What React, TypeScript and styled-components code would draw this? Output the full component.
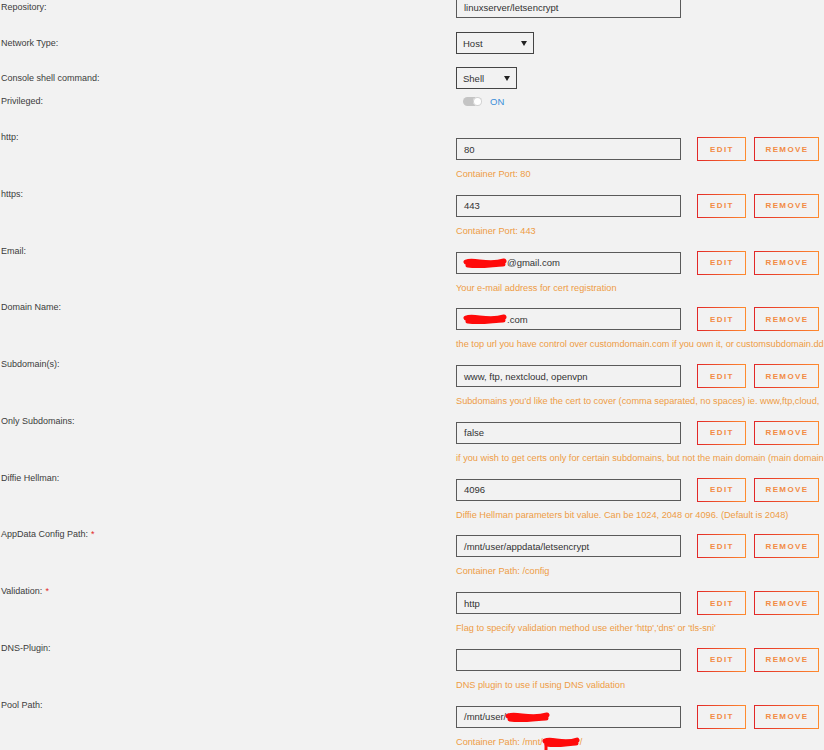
import React from 'react'
import styled, { createGlobalStyle } from 'styled-components'

const colors = {
  page: '#f2f2f2',
  text: '#3c3c3c',
  field: '#5a5a5a',
  helper: '#ee9c45',
  red: '#e22828',
  orange: '#ff8c2f',
  blue: '#3b8fd9',
}

const GlobalStyle = createGlobalStyle`
  html, body {
    margin: 0;
    padding: 0;
    background: ${colors.page};
    overflow: hidden;
  }
  body {
    font-family: "Liberation Sans", Arial, sans-serif;
    color: ${colors.text};
  }
`

const Form = styled.div`
  display: flex;
  flex-direction: column;
  margin-top: -4px;
  padding-left: 1px;
  overflow: hidden;
`

const SimpleRow = styled.div<{ $top: number; $h: number }>`
  display: grid;
  grid-template-columns: 455px 1fr;
  align-items: center;
  height: ${(p) => p.$h}px;
  margin-top: ${(p) => p.$top}px;
`

const ConfigRow = styled.div<{ $first?: boolean }>`
  display: grid;
  grid-template-columns: 455px 1fr;
  align-items: start;
  height: 56.75px;
  margin-top: ${(p) => (p.$first ? 18 : 0)}px;
`

const Label = styled.div`
  font-size: 9px;
  line-height: 12px;
  white-space: nowrap;
`

const Required = styled.span`
  color: ${colors.red};
  margin-left: 3px;
`

const Field = styled.div<{ $w?: number }>`
  box-sizing: border-box;
  width: ${(p) => p.$w ?? 225}px;
  height: 22px;
  border: 1px solid ${colors.field};
  padding: 0 7px;
  display: flex;
  align-items: center;
  font-size: 9.5px;
  color: #333;
  white-space: nowrap;
  overflow: hidden;
`

const Select = styled.div<{ $w: number }>`
  box-sizing: border-box;
  width: ${(p) => p.$w}px;
  height: 22px;
  border: 1px solid #444;
  padding: 0 6px;
  display: flex;
  align-items: center;
  justify-content: space-between;
  font-size: 9.5px;
  color: #333;
`

const Arrow = styled.span`
  width: 0;
  height: 0;
  border-left: 3px solid transparent;
  border-right: 3px solid transparent;
  border-top: 5px solid #222;
`

const ToggleWrap = styled.div`
  display: flex;
  align-items: center;
  gap: 8px;
  padding-left: 7px;
`

const Track = styled.div`
  position: relative;
  width: 19px;
  height: 9px;
  border-radius: 5px;
  background: #c4c4c4;
`

const Knob = styled.div`
  position: absolute;
  right: 0;
  top: 0;
  width: 9px;
  height: 9px;
  border-radius: 50%;
  background: #fff;
  box-shadow: 0 0 0 1px #d0d0d0 inset;
`

const OnText = styled.span`
  color: ${colors.blue};
  font-size: 9.5px;
`

const Controls = styled.div`
  display: flex;
  align-items: center;
  height: 24px;
  margin-top: 6px;
`

const Button = styled.div<{ $w: number; $ml: number }>`
  box-sizing: border-box;
  width: ${(p) => p.$w}px;
  height: 24px;
  margin-left: ${(p) => p.$ml}px;
  border: 1px solid;
  border-image: linear-gradient(90deg, ${colors.red}, ${colors.orange}) 1;
  display: flex;
  align-items: center;
  justify-content: center;
  font-size: 8px;
  font-weight: bold;
  letter-spacing: 1.4px;
  padding-left: 1px;
  color: #f28a44;
`

const Helper = styled.div`
  margin-top: 7px;
  font-size: 9.2px;
  line-height: 12px;
  color: ${colors.helper};
  white-space: nowrap;
`

const Scribble = styled.svg`
  display: inline-block;
  vertical-align: middle;
  overflow: visible;
`

const Redact: React.FC<{ w: number; tail?: boolean }> = ({ w, tail }) => (
  <Scribble width={w} height={12} viewBox={`0 0 ${w} 12`}>
    <path
      d={`M2 5 C ${w * 0.25} 2, ${w * 0.55} 9, ${w - 3} 4 M4 8 C ${w * 0.4} 10, ${w * 0.7} 7, ${w - 4} 7`}
      stroke="#ff0a0a"
      strokeWidth={5}
      strokeLinecap="round"
      fill="none"
    />
    {tail && <path d="M3 6 L3 20" stroke="#ff0a0a" strokeWidth={3} strokeLinecap="round" />}
  </Scribble>
)

type Item = {
  label: string
  required?: boolean
  value: React.ReactNode
  help: React.ReactNode
}

const items: Item[] = [
  { label: 'http:', value: '80', help: 'Container Port: 80' },
  { label: 'https:', value: '443', help: 'Container Port: 443' },
  {
    label: 'Email:',
    value: (
      <>
        <Redact w={43} />@gmail.com
      </>
    ),
    help: 'Your e-mail address for cert registration',
  },
  {
    label: 'Domain Name:',
    value: (
      <>
        <Redact w={43} />.com
      </>
    ),
    help: 'the top url you have control over customdomain.com if you own it, or customsubdomain.ddn',
  },
  {
    label: 'Subdomain(s):',
    value: 'www, ftp, nextcloud, openvpn',
    help: "Subdomains you'd like the cert to cover (comma separated, no spaces) ie. www,ftp,cloud,",
  },
  {
    label: 'Only Subdomains:',
    value: 'false',
    help: 'if you wish to get certs only for certain subdomains, but not the main domain (main domain',
  },
  {
    label: 'Diffie Hellman:',
    value: '4096',
    help: 'Diffie Hellman parameters bit value. Can be 1024, 2048 or 4096. (Default is 2048)',
  },
  {
    label: 'AppData Config Path:',
    required: true,
    value: '/mnt/user/appdata/letsencrypt',
    help: 'Container Path: /config',
  },
  {
    label: 'Validation:',
    required: true,
    value: 'http',
    help: "Flag to specify validation method use either 'http','dns' or 'tls-sni'",
  },
  { label: 'DNS-Plugin:', value: '', help: 'DNS plugin to use if using DNS validation' },
  {
    label: 'Pool Path:',
    value: (
      <>
        /mnt/user/
        <Redact w={44} />
      </>
    ),
    help: (
      <>
        Container Path: /mnt/
        <Redact w={37} tail />/
      </>
    ),
  },
]

const App: React.FC = () => {
  return (
    <>
      <GlobalStyle />
      <Form>
        <SimpleRow $top={0} $h={22}>
          <Label>Repository:</Label>
          <Field>linuxserver/letsencrypt</Field>
        </SimpleRow>
        <SimpleRow $top={14} $h={22}>
          <Label>Network Type:</Label>
          <Select $w={78}>
            Host <Arrow />
          </Select>
        </SimpleRow>
        <SimpleRow $top={13} $h={22}>
          <Label>Console shell command:</Label>
          <Select $w={61}>
            Shell <Arrow />
          </Select>
        </SimpleRow>
        <SimpleRow $top={0} $h={24}>
          <Label>Privileged:</Label>
          <ToggleWrap>
            <Track>
              <Knob />
            </Track>
            <OnText>ON</OnText>
          </ToggleWrap>
        </SimpleRow>
        {items.map((it, i) => (
          <ConfigRow key={it.label} $first={i === 0}>
            <Label>
              {it.label}
              {it.required && <Required>*</Required>}
            </Label>
            <div>
              <Controls>
                <Field>{it.value}</Field>
                <Button $w={49} $ml={16}>EDIT</Button>
                <Button $w={65} $ml={8}>REMOVE</Button>
              </Controls>
              <Helper>{it.help}</Helper>
            </div>
          </ConfigRow>
        ))}
      </Form>
    </>
  )
}

export default App
